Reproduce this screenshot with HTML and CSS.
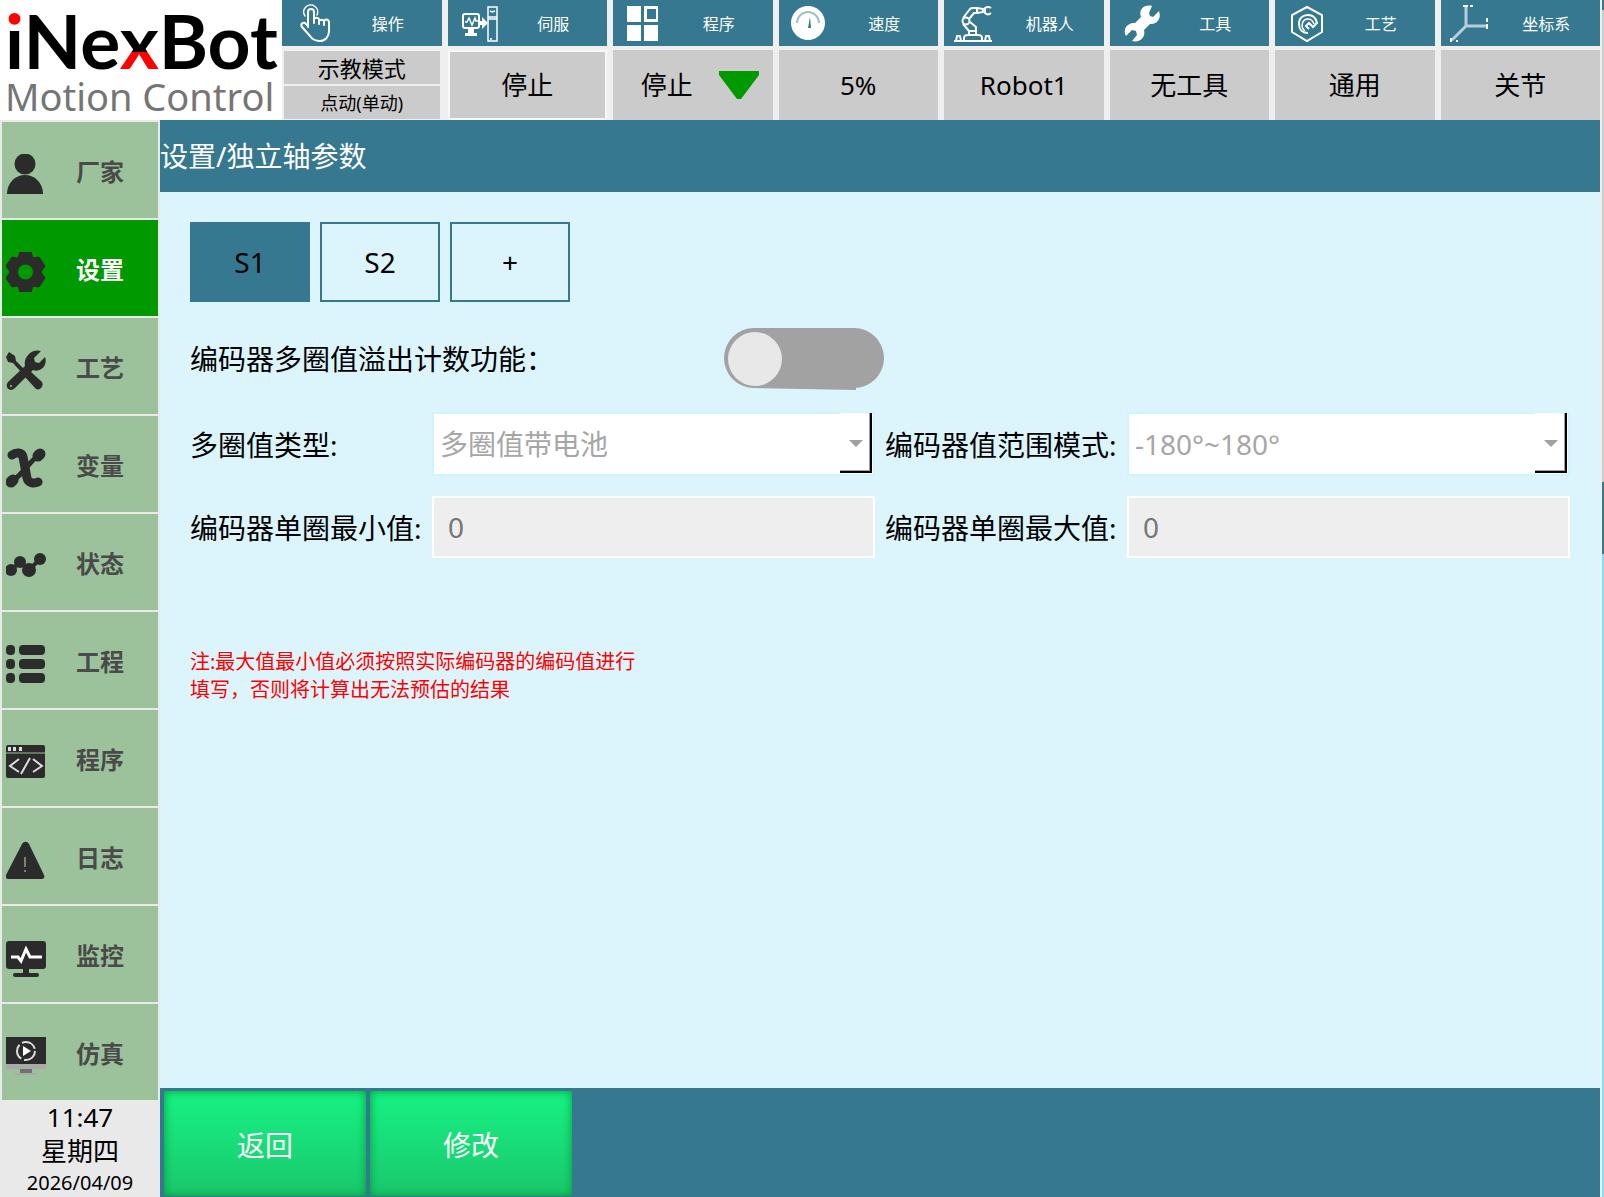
FILE: index.html
```html
<!DOCTYPE html>
<html lang="zh-CN">
<head>
    <meta charset="UTF-8">
    <title>设置/独立轴参数</title>
    <link rel="stylesheet" href="styles.css">
</head>
<body>
<header class="topbar">
    <div class="logo">
        <div class="logo-name"><span class="logo-i">i</span>Ne<span class="logo-x">x</span>Bot</div>
        <div class="logo-sub">Motion Control</div>
    </div>
    <div class="status">
        <div class="card">
            <div class="card-head">
                <svg viewBox="0 0 52 46" fill="none" stroke="#fff" stroke-width="2" stroke-linecap="round" stroke-linejoin="round">
                    <path d="M26 27V12a3 3 0 0 1 6 0v11M32 19a3 3 0 0 1 5 0v5M37 21a3 3 0 0 1 5 0v4M42 22a2.500 2.500 0 0 1 5 0v9c0 6-4 10-9 10-5 0-8-2-10-5l-8-9c-2-3 1-5 3-4l3 3"/>
                    <path d="M23 16a7 7 0 1 1 12-1" stroke-width="1.500"/>
                </svg>
                <span>操作</span>
            </div>
            <button class="value value-half value-mode">示教模式</button>
            <button class="value value-half value-jog">点动(单动)</button>
        </div>
        <div class="card">
            <div class="card-head">
                <svg viewBox="0 0 52 46" fill="none" stroke="#fff" stroke-width="2">
                    <rect x="15" y="14" width="16" height="14" rx="2"/>
                    <path d="M17 22h2l2-4 3 7 3-7 1 3h2" stroke-width="1.500"/>
                    <path d="M20 29h6v4h3v3H17v-3h3z" fill="#fff" stroke="none"/>
                    <path d="M30 21h4v-4l6 6-6 6v-4h-4z" fill="#fff" stroke="none"/>
                    <rect x="40" y="7" width="9" height="34" stroke-width="1.500"/>
                    <path d="M40 17h9M40 19h9M42 11l2 1 3-1M42 39h2" stroke-width="1.500"/>
                </svg>
                <span>伺服</span>
            </div>
            <button class="value value-framed">停止</button>
        </div>
        <div class="card">
            <div class="card-head">
                <svg viewBox="0 0 52 46" fill="#fff">
                    <path d="M14 6h14v16H14zM14 25h14v16H14zM31 25h14v16H31z"/>
                    <path d="M31 6h14v16H31zM34 9v10h9V9z" fill-rule="evenodd"/>
                </svg>
                <span>程序</span>
            </div>
            <button class="value value-program">停止
                <svg class="triangle" viewBox="0 0 40 28"><path d="M0 0h40v4L22 28h-4L0 4z" fill="#009900"/></svg>
            </button>
        </div>
        <div class="card">
            <div class="card-head">
                <svg viewBox="0 0 52 46" fill="none">
                    <circle cx="29" cy="23" r="17" fill="#fff"/>
                    <path d="M18 23a11 11 0 0 1 22 0" stroke="#9fc0cc" stroke-width="2"/>
                    <path d="M31 17l1 11h-3z" fill="#36788f"/>
                </svg>
                <span>速度</span>
            </div>
            <button class="value">5%</button>
        </div>
        <div class="card">
            <div class="card-head">
                <svg viewBox="0 0 52 46" fill="none" stroke="#fff" stroke-width="2" stroke-linejoin="round">
                    <path d="M10 41h38M12 41l1-5h3l1 5M41 41l1-5h3l1 5M20 40v-2q0-3 4-3h10q4 0 4 3v2M25 35v-4h7v4"/>
                    <circle cx="22" cy="21" r="3.500"/>
                    <path d="M19 18l7-9q1-1 3-1h4v5h-3l-5 6M19 24l6 7M26 22l6 5v4M33 8l6 1v3l-6 1"/>
                    <path d="M47 8q-3-2-6 0v5q3 3 6 0"/>
                </svg>
                <span>机器人</span>
            </div>
            <button class="value">Robot1</button>
        </div>
        <div class="card">
            <div class="card-head">
                <svg viewBox="0 0 52 46">
                    <path d="M42 6l-3 7 1 3 3 1 6-6c3 8-3 14-9 13l-6 6c2 7-4 13-12 11l5-6-1-4-4-1-6 6c-4-7 2-14 9-13l6-6C28 9 35 4 42 6z" fill="#fff"/>
                </svg>
                <span>工具</span>
            </div>
            <button class="value">无工具</button>
        </div>
        <div class="card">
            <div class="card-head">
                <svg viewBox="0 0 52 46" fill="none" stroke="#fff" stroke-width="2">
                    <path d="M32 7l15 8v17l-15 9-15-9V15z"/>
                    <path d="M33 33c-6 0-9-4-9-9 0-6 4-9 9-9 5 0 8 3 9 8l-4 4-4-4-3 3 3 3"/>
                    <path d="M30 31c-5-4-3-12 3-12 3 0 5 2 6 5" stroke-width="1.500"/>
                </svg>
                <span>工艺</span>
            </div>
            <button class="value">通用</button>
        </div>
        <div class="card">
            <div class="card-head">
                <svg viewBox="0 0 52 46" fill="none" stroke="#b5ced7" stroke-width="3">
                    <path d="M25 5v21h22M25 26L11 40"/>
                    <path d="M22 6h5M29 6h3M46 18v4M46 24v5M10 38v4M15 41h2" stroke="#fff" stroke-width="2"/>
                </svg>
                <span>坐标系</span>
            </div>
            <button class="value">关节</button>
        </div>
    </div>
</header>

<div class="main">
    <aside class="sidebar">
        <nav class="menu">
            <button class="menu-item">
                <svg viewBox="0 0 40 40"><circle cx="19" cy="10" r="10.500"/><path d="M1 40c0-11 8-19 18-19s18 8 18 19z"/></svg>
                厂家
            </button>
            <button class="menu-item active">
                <svg viewBox="0 0 40 40"><path fill-rule="evenodd" d="M14 0h11l2 6 6-1 6 9-4 6 4 6-6 9-6-1-2 6H14l-2-6-6 1-6-9 4-6-4-6 6-9 6 1zM19.500 12a8 8 0 1 0 0 16 8 8 0 0 0 0-16z" stroke="#2b2b2b" stroke-linejoin="round"/></svg>
                设置
            </button>
            <button class="menu-item">
                <svg viewBox="0 0 40 40">
                    <path d="M3 2l6 4 1 5 8 8-3 3-8-9-5-1-2-5z"/>
                    <path d="M35 1l-7 7 1 4 4 1 6-6c3 8-4 16-12 13L9 38c-5 5-11-1-7-6l17-16C17 7 26-2 35 1z"/>
                    <path d="M24 21l12 11c2 4-2 9-6 7L19 27z"/>
                    <circle cx="5" cy="36" r="1" fill="#9cc29b"/>
                </svg>
                工艺
            </button>
            <button class="menu-item">
                <svg viewBox="0 0 40 40" fill="none" stroke="#2b2b2b" stroke-linecap="round">
                    <path class="line" d="M6 7c4-3 10-3 11 2l4 21c1 5 7 6 11 4" stroke-width="9"/>
                    <path class="line" d="M34 7c-5 2-8 6-14 13S10 31 6 33" stroke-width="5"/>
                    <path class="line" d="M34 6l-2 2M5 34l2-2" stroke-width="11"/>
                </svg>
                变量
            </button>
            <button class="menu-item">
                <svg viewBox="0 0 40 40">
                    <circle cx="5" cy="24" r="6"/><circle cx="14" cy="16" r="6"/><circle cx="23" cy="24" r="7"/><circle cx="34" cy="13" r="6"/>
                    <path class="line" d="M5 24l9-8 9 8 11-11" stroke="#2b2b2b" stroke-width="4"/>
                </svg>
                状态
            </button>
            <button class="menu-item">
                <svg viewBox="0 0 40 40">
                    <rect x="0" y="1" width="9" height="10" rx="4"/><rect x="13" y="1" width="26" height="10" rx="4"/>
                    <rect x="0" y="15" width="9" height="10" rx="4"/><rect x="13" y="15" width="26" height="10" rx="4"/>
                    <rect x="0" y="29" width="9" height="10" rx="4"/><rect x="13" y="29" width="26" height="10" rx="4"/>
                </svg>
                工程
            </button>
            <button class="menu-item">
                <svg viewBox="0 0 40 40">
                    <rect x="0" y="3" width="39" height="33" rx="2"/>
                    <path d="M0 11h39" stroke="#9cc29b"/>
                    <path d="M2 5h3v4H2zM7 5h3v4H7zM13 5h3v4h-3z" fill="#ddd"/>
                    <path class="line" d="M13 17l-9 7 9 6M27 17l9 7-9 6M24 16l-9 16" stroke="#ddd" stroke-width="2"/>
                </svg>
                程序
            </button>
            <button class="menu-item">
                <svg viewBox="0 0 40 40">
                    <path d="M16 4c2-3 5-3 7 0l15 31c1 2 0 4-2 4H3c-3 0-4-2-3-4z"/>
                    <path d="M19 17v10M19 30v2" stroke="#6f876e" stroke-width="2"/>
                </svg>
                日志
            </button>
            <button class="menu-item">
                <svg viewBox="0 0 40 40">
                    <path d="M3 3h34q3 0 3 3v22q0 3-3 3H23v4h8q2 0 2 2t-2 2H9q-2 0-2-2t2-2h8v-4H3q-3 0-3-3V6q0-3 3-3z"/>
                    <path class="line" d="M5 19h7l3 4 5-12 4 8h12" stroke="#fff" stroke-width="3"/>
                </svg>
                监控
            </button>
            <button class="menu-item">
                <svg viewBox="0 0 40 40">
                    <path d="M0 1h40v27H0z"/>
                    <path d="M0 28h40v5H0zM9 37h22v2H9z" fill="#a8aaa8"/>
                    <path d="M14 33h12v4H14z" fill="#717171"/>
                    <circle class="line" cx="20" cy="15" r="9" stroke="#ddd" stroke-width="2" stroke-dasharray="16 3"/>
                    <path d="M17 10l8 5-8 5z" fill="#fff"/>
                </svg>
                仿真
            </button>
        </nav>
        <div class="clock">
            <div class="clock-time">11:47</div>
            <div class="clock-day">星期四</div>
            <div class="clock-date">2026/04/09</div>
        </div>
    </aside>

    <main class="page">
        <h1 class="page-title">设置/独立轴参数</h1>
        <div class="content">
            <div class="tabs">
                <button class="tab selected">S1</button>
                <button class="tab">S2</button>
                <button class="tab">+</button>
            </div>
            <div class="switch-row">
                <label for="overflow">编码器多圈值溢出计数功能：</label>
                <input type="checkbox" id="overflow" class="switch">
            </div>
            <div class="fields">
                <div class="field">
                    <label for="turnType">多圈值类型:</label>
                    <div class="combo">
                        <select id="turnType" disabled>
                            <option>多圈值带电池</option>
                        </select>
                    </div>
                </div>
                <div class="field">
                    <label for="rangeMode">编码器值范围模式:</label>
                    <div class="combo">
                        <select id="rangeMode" disabled>
                            <option>-180°~180°</option>
                        </select>
                    </div>
                </div>
                <div class="field">
                    <label for="minValue">编码器单圈最小值:</label>
                    <input type="text" id="minValue" value="0" disabled>
                </div>
                <div class="field">
                    <label for="maxValue">编码器单圈最大值:</label>
                    <input type="text" id="maxValue" value="0" disabled>
                </div>
            </div>
            <p class="note">注:最大值最小值必须按照实际编码器的编码值进行<br>填写，否则将计算出无法预估的结果</p>
        </div>
        <footer class="actions">
            <button class="action">返回</button>
            <button class="action">修改</button>
        </footer>
    </main>
</div>
</body>
</html>
```

FILE: styles.css
```css
*,
*::before,
*::after {
    box-sizing: border-box;
}

body {
    display: flex;
    flex-direction: column;
    min-height: 100vh;
    margin: 0;
    padding-right: 4px;
    /* strip of the desktop behind the window */
    background: linear-gradient(#36788f 10px, #cbcbcb 10px, #cbcbcb 482px, #36788f 482px, #36788f 554px, #85dcf8 554px) right / 2px 100% no-repeat #efefef;
    font-family: "Noto Sans", "Noto Sans CJK SC", sans-serif;
    color: #000;
}

button,
input,
select {
    margin: 0;
    padding: 0;
    border: none;
    border-radius: 0;
    font-family: inherit;
    color: inherit;
}

/* top bar */
.topbar {
    display: flex;
    height: 120px;
}

.logo {
    width: 282px;
    padding: 4px 0 0 5px;
    background: #fff;
    white-space: nowrap;
}

.logo-name {
    font-family: Lato, sans-serif;
    font-size: 75px;
    font-weight: 700;
    line-height: 72px;
}

.logo-i,
.logo-x {
    background: linear-gradient(#f00 30px, #000 30px);
    -webkit-background-clip: text;
    background-clip: text;
    color: transparent;
}

.logo-x {
    background-image: linear-gradient(#000 57px, #f00 57px);
}

.logo-sub {
    font-size: 38px;
    line-height: 40px;
    color: #757575;
}

.status {
    flex: 1;
    display: grid;
    grid-template-columns: repeat(8, 1fr);
    gap: 6px;
}

.card {
    display: flex;
    flex-direction: column;
}

.card-head {
    display: flex;
    align-items: center;
    height: 46px;
    margin-bottom: 4px;
    background: #36788f;
    color: #fff;
    font-size: 16px;
}

.card-head svg {
    width: 52px;
    height: 46px;
}

.card-head span {
    flex: 1;
    text-align: center;
}

.value {
    flex: 1;
    background: #cbcbcb;
    font-size: 26px;
    line-height: 32px;
}

.value-half {
    margin: 1px 2px;
}

.value-mode {
    font-size: 22px;
}

.value-jog {
    font-size: 18px;
}

.value-framed {
    border: 2px solid #f8f8f8;
}

.value-program {
    display: flex;
    align-items: center;
    justify-content: center;
    gap: 26px;
    padding-left: 14px;
}

.triangle {
    width: 40px;
    height: 28px;
}

.main {
    flex: 1;
    display: flex;
}

/* left menu */
.sidebar {
    width: 160px;
    background: #e9e9e9;
}

.menu {
    display: flex;
    flex-direction: column;
    gap: 2px;
    padding: 2px 2px 0;
}

.menu-item {
    display: flex;
    align-items: center;
    gap: 30px;
    height: 96px;
    padding-left: 4px;
    background: #9cc29b;
    color: #4a4a4a;
    font-size: 24px;
    font-weight: bold;
}

.menu-item svg {
    width: 40px;
    height: 40px;
    margin-top: 8px;
    fill: #2b2b2b;
}

.menu-item .line {
    fill: none;
}

.menu-item.active {
    background: #009900;
    color: #fff;
}

.clock {
    text-align: center;
    font-size: 26px;
}

.clock-time {
    line-height: 35px;
}

.clock-day {
    line-height: 33px;
}

.clock-date {
    font-size: 20px;
    line-height: 29px;
}

/* page */
.page {
    flex: 1;
    display: flex;
    flex-direction: column;
    background: #dcf5fd;
}

.page-title {
    margin: 0;
    background: #36788f;
    color: #fff;
    font-size: 28px;
    font-weight: normal;
    line-height: 72px;
}

.content {
    flex: 1;
    padding: 30px 30px 0;
    font-size: 28px;
}

.tabs {
    display: flex;
    gap: 10px;
    margin-bottom: 26px;
}

.tab {
    width: 120px;
    height: 80px;
    border: 2px solid #36788f;
    background: none;
    font-size: 28px;
}

.tab.selected {
    background: #36788f;
}

.switch-row {
    display: flex;
    align-items: center;
    height: 60px;
    margin-bottom: 24px;
}

.switch-row label {
    width: 534px;
}

.switch {
    appearance: none;
    position: relative;
    width: 160px;
    height: 60px;
    border-radius: 30px;
    background: #a2a2a2;
}

.switch::before {
    content: "";
    position: absolute;
    top: 4px;
    left: 4px;
    width: 54px;
    height: 54px;
    border-radius: 50%;
    background: #e8e8e8;
}

.switch::after {
    content: "";
    position: absolute;
    top: 58px;
    left: 28px;
    width: 104px;
    height: 4px;
    background: #a2a2a2;
    clip-path: polygon(0 0, 100% 0, 100% 100%, 0 50%);
}

.fields {
    display: grid;
    grid-template-columns: 1fr 1fr;
    gap: 20px 10px;
}

.field {
    display: flex;
    align-items: center;
}

.field label {
    width: 242px;
}

.field input {
    flex: 1;
    height: 62px;
    padding-left: 14px;
    border: 2px solid #fff;
    background: #eee;
    color: #767676;
    font-size: 28px;
}

.combo {
    flex: 1;
    position: relative;
}

.combo select {
    display: block;
    appearance: none;
    width: 100%;
    height: 64px;
    padding-left: 6px;
    border: 2px solid #d0f3ff;
    background: #fff;
    color: #a6a6a6;
    font-size: 28px;
    opacity: 1;
}

/* drop-down button */
.combo::before {
    content: "";
    position: absolute;
    top: 1px;
    right: 3px;
    width: 32px;
    height: 60px;
    border-right: 2px solid #000;
    border-bottom: 2px solid #000;
    box-shadow: inset -1px -1px #a0a0a0;
    background: #fff;
    pointer-events: none;
}

.combo::after {
    content: "";
    position: absolute;
    top: 28px;
    right: 12px;
    border: 7px solid transparent;
    border-top-color: #a0a0a0;
    border-bottom: none;
    pointer-events: none;
}

.note {
    margin: 90px 0 0;
    color: #f00;
    font-size: 20px;
    line-height: 28px;
}

.actions {
    display: flex;
    gap: 4px;
    padding: 3px 4px 1px;
    background: #36788f;
}

.action {
    width: 202px;
    height: 105px;
    background: linear-gradient(#17f284, #1ac76c);
    box-shadow: inset 0 0 10px #009a3a;
    color: #fff;
    font-size: 28px;
}
```
